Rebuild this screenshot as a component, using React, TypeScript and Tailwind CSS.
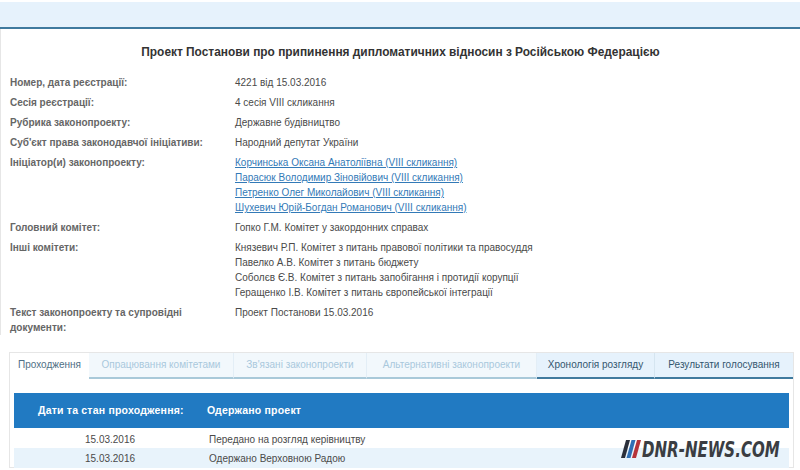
const rows: { label: string; values: string[]; links?: boolean }[] = [
  { label: 'Номер, дата реєстрації:', values: ['4221 від 15.03.2016'] },
  { label: 'Сесія реєстрації:', values: ['4 сесія VIII скликання'] },
  { label: 'Рубрика законопроекту:', values: ['Державне будівництво'] },
  { label: "Суб'єкт права законодавчої ініціативи:", values: ['Народний депутат України'] },
  {
    label: 'Ініціатор(и) законопроекту:',
    links: true,
    values: [
      'Корчинська Оксана Анатоліївна (VIII скликання)',
      'Парасюк Володимир Зіновійович (VIII скликання)',
      'Петренко Олег Миколайович (VIII скликання)',
      'Шухевич Юрій-Богдан Романович (VIII скликання)',
    ],
  },
  { label: 'Головний комітет:', values: ['Гопко Г.М. Комітет у закордонних справах'] },
  {
    label: 'Інші комітети:',
    values: [
      'Князевич Р.П. Комітет з питань правової політики та правосуддя',
      'Павелко А.В. Комітет з питань бюджету',
      'Соболєв Є.В. Комітет з питань запобігання і протидії корупції',
      'Геращенко І.В. Комітет з питань європейської інтеграції',
    ],
  },
  { label: 'Текст законопроекту та супровідні документи:', values: ['Проект Постанови 15.03.2016'] },
]

const tabs = [
  { name: 'Опрацювання комітетами', w: 'w-[145px]' },
  { name: "Зв'язані законопроекти", w: 'w-[133px]' },
  { name: 'Альтернативні законопроекти', w: 'w-[170px]' },
]

export default function App() {
  return (
    <div className="relative h-[470px] w-[800px] overflow-hidden bg-white font-['Liberation_Sans',sans-serif] text-[10px] text-[#4a4a4a]">
      <div className="mt-[2px] h-[27px] border-b-2 border-[#3f7a9e] bg-[#e6f2fc]" />
      <div className="border-l border-[#e6e6e6]">
        <h1 className="pt-[16px] pb-[16px] text-center text-[11.9px] leading-[14px] font-bold text-[#333]">
          Проект Постанови про припинення дипломатичних відносин з Російською Федерацією
        </h1>
        <div className="flex flex-col gap-[5px] pl-[9px]">
          {rows.map((row) => (
            <div key={row.label} className="flex leading-[15px]">
              <div className="w-[225px] pr-[30px] font-bold text-[#666]">{row.label}</div>
              <div className="flex flex-col">
                {row.values.map((v) =>
                  row.links ? (
                    <a key={v} className="text-[#337ab7] underline">
                      {v}
                    </a>
                  ) : (
                    <span key={v}>{v}</span>
                  ),
                )}
              </div>
            </div>
          ))}
        </div>
      </div>

      <div className="mt-[17px] ml-[9px] h-[116px] w-[785px] border border-[#e6e6e6]">
        <div className="flex h-[26px] leading-[24px]">
          <div className="w-[79px] bg-white text-center text-[#4f6f85]">Проходження</div>
          {tabs.map((t) => (
            <div
              key={t.name}
              className={`${t.w} border-r border-b-2 border-r-[#e3eef6] border-b-[#a9c9d9] bg-[#f2f8fc] text-center text-[#a9c8dc]`}
            >
              {t.name}
            </div>
          ))}
          <div className="w-[118px] border-r border-b-2 border-r-[#d5e5f0] border-b-[#3f7a9e] bg-[#e6f2fc] text-center text-[#33566e]">
            Хронологія розгляду
          </div>
          <div className="flex-1 border-b-2 border-[#3f7a9e] bg-[#e6f2fc] text-center text-[#33566e]">
            Результати голосування
          </div>
        </div>
        <div className="mx-[4px] mt-[14px] flex h-[35px] items-center bg-[#217ac2] font-bold text-white">
          <div className="w-[193px] pl-[24px] text-[10.5px] tracking-[0.2px]">Дати та стан проходження:</div>
          <div className="text-[10.5px] tracking-[0.2px]">Одержано проект</div>
        </div>
        <div className="mx-[4px] flex h-[20px] items-center pt-[2px]">
          <div className="w-[195px] pl-[71px]">15.03.2016</div>
          <div>Передано на розгляд керівництву</div>
        </div>
        <div className="mx-[4px] flex h-[20px] items-center bg-[#e8f3fb]">
          <div className="w-[195px] pl-[71px]">15.03.2016</div>
          <div>Одержано Верховною Радою</div>
        </div>
      </div>

      {/* watermark */}
      <div className="absolute top-[439px] left-[621px] flex items-center">
        <svg width="21" height="18" viewBox="0 0 21 18">
          <polygon points="5,0 9,0 4,18 0,18" fill="#2a2f3a" />
          <polygon points="10.5,0 14.5,0 9.5,18 5.5,18" fill="#2f6fb5" />
          <polygon points="16,0 20,0 15,18 11,18" fill="#b5333a" />
        </svg>
        <span className="origin-left scale-x-[0.885] scale-y-[1.25] font-['DejaVu_Sans',sans-serif] text-[17px] leading-[20px] font-bold text-[#3a3d42] italic">
          DNR-NEWS.COM
        </span>
      </div>
    </div>
  )
}
